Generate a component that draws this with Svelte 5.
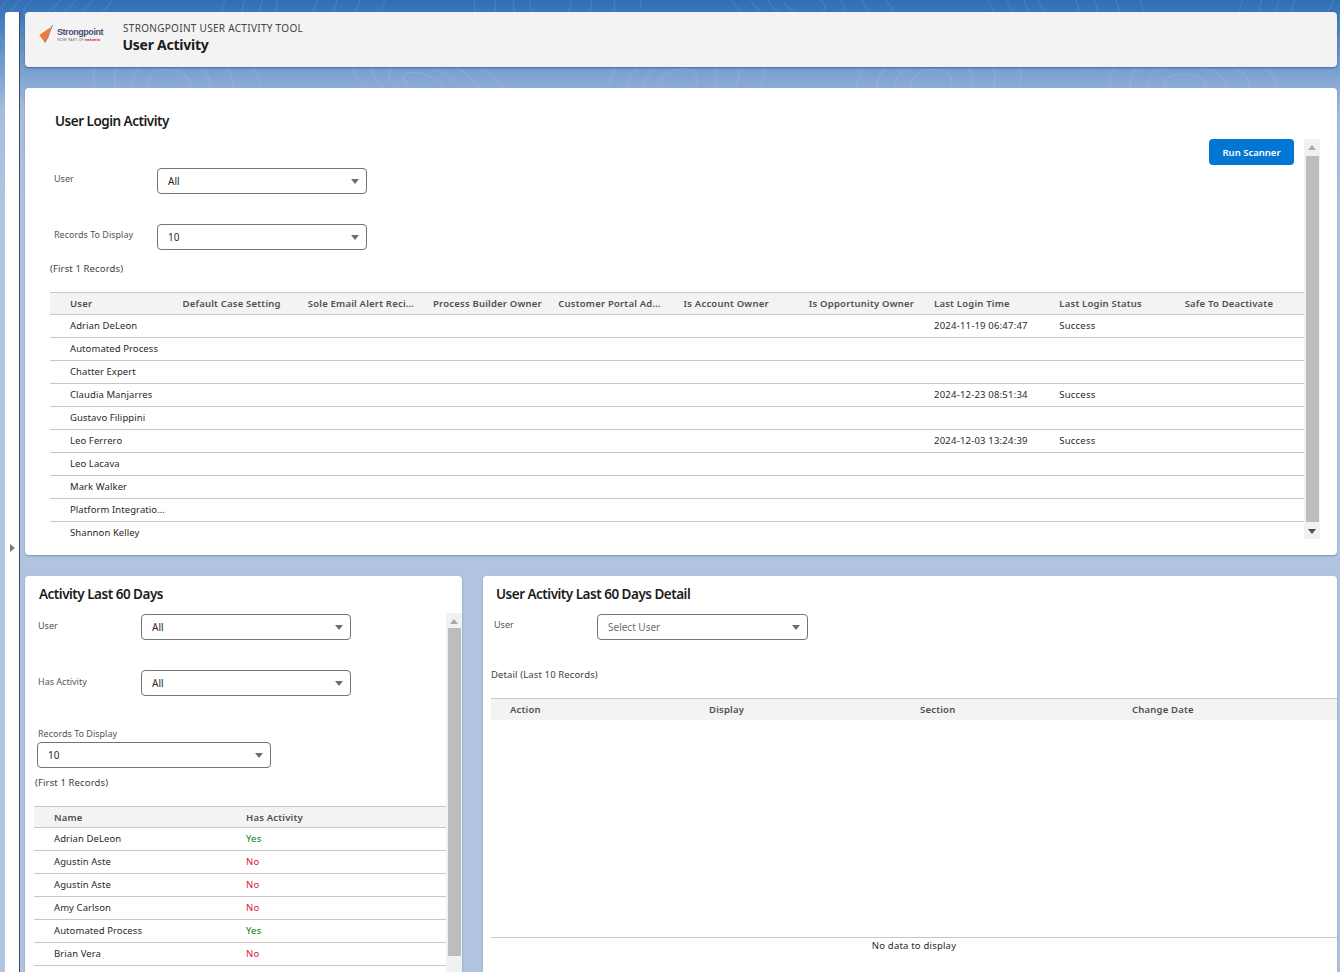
<script lang="ts">
  const loginColumns = [
    "User",
    "Default Case Setting",
    "Sole Email Alert Recipient",
    "Process Builder Owner",
    "Customer Portal Administrator",
    "Is Account Owner",
    "Is Opportunity Owner",
    "Last Login Time",
    "Last Login Status",
    "Safe To Deactivate",
  ];

  const logins = [
    { user: "Adrian DeLeon", time: "2024-11-19 06:47:47", status: "Success" },
    { user: "Automated Process" },
    { user: "Chatter Expert" },
    { user: "Claudia Manjarres", time: "2024-12-23 08:51:34", status: "Success" },
    { user: "Gustavo Filippini" },
    { user: "Leo Ferrero", time: "2024-12-03 13:24:39", status: "Success" },
    { user: "Leo Lacava" },
    { user: "Mark Walker" },
    { user: "Platform Integration User" },
    { user: "Shannon Kelley" },
  ];

  const activity = [
    { name: "Adrian DeLeon", has: "Yes" },
    { name: "Agustin Aste", has: "No" },
    { name: "Agustin Aste", has: "No" },
    { name: "Amy Carlson", has: "No" },
    { name: "Automated Process", has: "Yes" },
    { name: "Brian Vera", has: "No" },
  ];

  const detailColumns = ["Action", "Display", "Section", "Change Date"];

  // faint contour rings behind the header
  const contours = [];
  for (let i = 0; i < 11; i++) {
    const cx = 40 + i * 127;
    const cy = i % 2 ? 84 : 4;
    for (const r of [16, 30, 46, 64]) {
      contours.push({
        cx: cx + r * 0.15,
        cy,
        rx: r * 1.3,
        ry: r * (i % 3 === 0 ? 0.6 : 0.9),
        tilt: (i * 37) % 60 - 30,
      });
    }
  }
</script>

{#snippet select(value, wide = false, placeholder = false)}
  <div class="select" class:wide class:placeholder>
    <span>{value}</span>
    <i class="caret"></i>
  </div>
{/snippet}

{#snippet scrollbar(thumbClass)}
  <div class="scrollbar {thumbClass}">
    <i class="arrow up"></i>
    <div class="thumb"></div>
    <i class="arrow down"></i>
  </div>
{/snippet}

<div class="page">
  <svg class="topo" width="1340" height="88" viewBox="0 0 1340 88" fill="none" aria-hidden="true">
    <g stroke="#ffffff" stroke-opacity="0.11" stroke-width="1">
      {#each contours as c}
        <ellipse cx={c.cx} cy={c.cy} rx={c.rx} ry={c.ry} transform="rotate({c.tilt} {c.cx} {c.cy})" />
      {/each}
    </g>
  </svg>

  <aside class="rail"><i class="rail-toggle"></i></aside>

  <main class="main">
    <header class="page-header">
      <div class="logo">
        <svg width="15" height="19" viewBox="0 0 15 19" aria-hidden="true">
          <polygon points="0.3,10 12,2 6,17.7" fill="#ee7a3b" />
          <polygon points="12,2 13.6,0 9.5,13 6,17.7" fill="#f6a56f" />
          <line x1="13.6" y1="0" x2="6" y2="17.7" stroke="#555a75" stroke-width="0.6" />
        </svg>
        <div class="logo-text">
          <strong>Strongpoint</strong>
          <small>NOW PART OF <b>netwrix</b></small>
        </div>
      </div>
      <div class="heading">
        <div class="eyebrow">STRONGPOINT USER ACTIVITY TOOL</div>
        <h1>User Activity</h1>
      </div>
    </header>

    <section class="card login">
      <h2>User Login Activity</h2>
      <div class="scroll-body">
        <div class="scroll-content">
          <div class="actions"><button type="button">Run Scanner</button></div>
          <div class="field">
            <span class="label">User</span>
            {@render select("All")}
          </div>
          <div class="field">
            <span class="label">Records To Display</span>
            {@render select("10")}
          </div>
          <p class="note">(First 1 Records)</p>
          <table class="login-table">
            <thead>
              <tr>
                {#each loginColumns as col}
                  <th><span>{col}</span></th>
                {/each}
              </tr>
            </thead>
            <tbody>
              {#each logins as row}
                <tr>
                  <td><span>{row.user}</span></td>
                  <td></td><td></td><td></td><td></td><td></td><td></td>
                  <td><span>{row.time ?? ""}</span></td>
                  <td><span>{row.status ?? ""}</span></td>
                  <td></td>
                </tr>
              {/each}
            </tbody>
          </table>
        </div>
        {@render scrollbar("thumb-login")}
      </div>
    </section>

    <div class="bottom">
      <section class="card activity">
        <h2>Activity Last 60 Days</h2>
        <div class="scroll-body">
          <div class="scroll-content">
            <div class="field">
              <span class="label">User</span>
              {@render select("All")}
            </div>
            <div class="field">
              <span class="label">Has Activity</span>
              {@render select("All")}
            </div>
            <div class="stacked">
              <span class="label">Records To Display</span>
              {@render select("10", true)}
            </div>
            <p class="note">(First 1 Records)</p>
            <table class="activity-table">
              <thead>
                <tr><th>Name</th><th>Has Activity</th></tr>
              </thead>
              <tbody>
                {#each activity as row}
                  <tr>
                    <td>{row.name}</td>
                    <td class={row.has === "Yes" ? "yes" : "no"}>{row.has}</td>
                  </tr>
                {/each}
              </tbody>
            </table>
          </div>
          {@render scrollbar("thumb-activity")}
        </div>
      </section>

      <section class="card detail">
        <h2>User Activity Last 60 Days Detail</h2>
        <div class="field">
          <span class="label">User</span>
          {@render select("Select User", false, true)}
        </div>
        <p class="note">Detail (Last 10 Records)</p>
        <div class="detail-head">
          {#each detailColumns as col}
            <span>{col}</span>
          {/each}
        </div>
        <div class="detail-empty"></div>
        <div class="no-data">No data to display</div>
      </section>
    </div>
  </main>
</div>

<style>
  :global(body) {
    margin: 0;
    background: #b0c4df;
    font-family: "Noto Sans", "Liberation Sans", sans-serif;
    color: #2b2826;
  }

  .page {
    position: relative;
    display: flex;
    height: 972px;
    overflow: hidden;
    padding: 12px 3px 0 5px;
    box-sizing: border-box;
    background: linear-gradient(to bottom, #2f6fb6 0, #7ea3d2 75px, #a5bddd 110px, #b0c4df 200px);
  }

  .topo {
    position: absolute;
    top: 0;
    left: 0;
  }

  .rail {
    position: relative;
    flex: none;
    width: 14px;
    margin-right: 5px;
    background: #fff;
    border-right: 1px solid #3b4a5e;
    border-radius: 3px 0 0 0;
    box-sizing: content-box;
    display: flex;
    flex-direction: column;
    align-items: center;
    padding-top: 532px;
  }

  .rail-toggle {
    width: 0;
    height: 0;
    margin-left: 1px;
    border-left: 5.5px solid #7a7a7a;
    border-top: 4.5px solid transparent;
    border-bottom: 4.5px solid transparent;
  }

  .main {
    position: relative;
    flex: 1;
    min-width: 0;
    display: flex;
    flex-direction: column;
  }

  .page-header {
    height: 55px;
    flex: none;
    display: flex;
    align-items: center;
    background: #f3f3f3;
    border-radius: 4px;
    box-shadow: 0 1px 2px rgba(40, 60, 90, 0.55);
    margin-bottom: 21px;
    padding-left: 14px;
    box-sizing: border-box;
  }

  .logo {
    display: flex;
    align-items: flex-start;
    gap: 3px;
    width: 84px;
    flex: none;
    margin-top: -11px;
  }

  .logo-text {
    display: flex;
    flex-direction: column;
    line-height: 1;
    padding-top: 3px;
  }

  .logo-text strong {
    font-family: "Liberation Sans", sans-serif;
    font-size: 9px;
    font-weight: 700;
    letter-spacing: -0.45px;
    color: #4b4e78;
  }

  .logo-text small {
    font-size: 4px;
    color: #77787f;
    margin-top: 1px;
    white-space: nowrap;
  }

  .logo-text b {
    color: #d8213a;
  }

  .heading {
    margin-top: -5px;
  }

  .eyebrow {
    font-size: 10px;
    letter-spacing: 0.3px;
    line-height: 13px;
    color: #444;
  }

  h1 {
    margin: 1px 0 0 -0.5px;
    font-size: 14px;
    line-height: 17px;
    font-weight: 700;
    letter-spacing: -0.25px;
    color: #1c1c1c;
  }

  h2 {
    margin: 0;
    font-size: 13.5px;
    line-height: 18px;
    font-weight: 600;
    letter-spacing: -0.5px;
    color: #1c1c1c;
  }

  .card {
    background: #fff;
    border-radius: 4px;
    box-shadow: 0 1px 2px rgba(60, 80, 110, 0.45);
  }

  .login {
    height: 467px;
    flex: none;
    box-sizing: border-box;
    padding: 24px 17px 0 25px;
    margin-bottom: 21px;
  }

  .login h2 {
    padding-left: 5px;
    margin-bottom: 9px;
  }

  .scroll-body {
    display: flex;
    align-items: flex-start;
  }

  .scroll-content {
    flex: 1;
    min-width: 0;
  }

  .actions {
    display: flex;
    justify-content: flex-end;
    padding-right: 10px;
    height: 29px;
  }

  button {
    width: 85px;
    height: 26px;
    padding: 0;
    border: 0;
    border-radius: 4px;
    background: #0176d3;
    color: #fff;
    font: 600 9.5px "Noto Sans", sans-serif;
  }

  .field {
    display: flex;
    align-items: flex-start;
    margin-bottom: 30px;
    padding-left: 4px;
  }

  .label {
    flex: none;
    width: 103px;
    font-size: 9px;
    line-height: 13px;
    padding-top: 4px;
    color: #555;
  }

  .select {
    flex: none;
    width: 210px;
    height: 26px;
    box-sizing: border-box;
    display: flex;
    align-items: center;
    justify-content: space-between;
    padding: 0 7px 0 10px;
    border: 1px solid #747474;
    border-radius: 4px;
    background: #fff;
    font-size: 10px;
    color: #2b2826;
  }

  .select.wide {
    width: 234px;
  }

  .select.placeholder {
    width: 211px;
    color: #706e6b;
  }

  .caret {
    width: 0;
    height: 0;
    margin-top: 1px;
    border-top: 5px solid #706e6b;
    border-left: 4.5px solid transparent;
    border-right: 4.5px solid transparent;
  }

  .note {
    margin: 0;
    font-size: 9.5px;
    line-height: 13px;
    letter-spacing: 0.12px;
    color: #3e3e3c;
  }

  .login .note {
    margin: -18px 0 17px;
  }

  table {
    border-collapse: collapse;
    table-layout: fixed;
    width: 100%;
    font-size: 9.5px;
    letter-spacing: 0.2px;
  }

  th {
    height: 21px;
    padding: 0;
    background: #f3f3f3;
    border-top: 1px solid #c9c7c5;
    border-bottom: 1px solid #c9c7c5;
    text-align: left;
    font-weight: 600;
    color: #514f4d;
  }

  td {
    height: 20px;
    padding: 0 0 2px;
    border-bottom: 1px solid #c9c7c5;
    color: #2b2826;
  }

  .login-table tr:last-child td {
    border-bottom: 0;
  }

  .login-table th span,
  .login-table td span {
    display: block;
    padding-left: 6px;
    overflow: hidden;
    white-space: nowrap;
    text-overflow: ellipsis;
  }

  .login-table th:first-child,
  .login-table td:first-child {
    width: 126.5px;
  }

  .login-table th:first-child span,
  .login-table td:first-child span {
    padding: 0 11px 0 20px;
  }

  .login-table td:first-child span,
  .activity-table td:first-child {
    letter-spacing: 0.08px;
  }

  .login-table th span {
    padding-right: 8px;
  }

  .scrollbar {
    flex: none;
    width: 16px;
    height: 400px;
    background: #f1f1f1;
    display: flex;
    flex-direction: column;
    align-items: center;
    box-sizing: border-box;
  }

  .thumb {
    width: 13px;
    background: #bdbdbd;
  }

  .thumb-login .thumb {
    height: 366px;
  }

  .thumb-activity {
    height: 420px;
    margin-top: -1px;
  }

  .thumb-activity .thumb {
    height: 328px;
  }

  .thumb-activity .arrow.up {
    margin-bottom: 4px;
  }

  .thumb-activity .arrow.down {
    margin-top: 40px;
  }

  .arrow {
    flex: none;
    width: 0;
    height: 0;
    border-left: 4px solid transparent;
    border-right: 4px solid transparent;
  }

  .arrow.up {
    margin: 6px 0 6px;
    border-bottom: 5px solid #a8a8a8;
  }

  .arrow.down {
    margin-top: 7px;
    border-top: 5px solid #505050;
  }

  .bottom {
    flex: 1;
    min-height: 0;
    display: flex;
    gap: 21px;
  }

  .activity {
    flex: none;
    width: 437px;
    padding: 9px 0 0 9px;
    box-sizing: border-box;
    overflow: hidden;
    border-radius: 4px 4px 0 0;
  }

  .activity h2 {
    padding-left: 5px;
    margin-bottom: 11px;
  }

  .activity .field .label {
    padding-top: 5px;
  }

  .stacked {
    padding: 1px 0 0 3px;
  }

  .stacked .label {
    display: block;
    width: auto;
    padding: 0 0 2px 1px;
  }

  .activity .note {
    margin: 8px 0 17px 1px;
  }

  .activity-table th {
    height: 20px;
  }

  .activity-table th:first-child,
  .activity-table td:first-child {
    width: 192px;
    padding-left: 20px;
  }

  .yes {
    color: #0a7d0a;
  }

  .no {
    color: #d9202c;
  }

  .detail {
    flex: 1;
    min-width: 0;
    padding: 9px 0 0 8px;
    box-sizing: border-box;
    display: flex;
    flex-direction: column;
    border-radius: 4px 4px 0 0;
  }

  .detail h2 {
    padding-left: 5px;
    margin-bottom: 11px;
  }

  .detail .field {
    padding-left: 3px;
    margin-bottom: 28px;
  }

  .detail .note {
    margin-bottom: 17px;
  }

  .detail-head {
    display: grid;
    grid-template-columns: 199px 211px 212px 1fr;
    height: 21px;
    flex: none;
    align-items: center;
    background: #f3f3f3;
    border-top: 1px solid #c9c7c5;
    font-size: 9.5px;
    font-weight: 600;
    letter-spacing: 0.2px;
    color: #514f4d;
  }

  .detail-head span {
    padding-left: 19px;
  }

  .detail-empty {
    height: 217px;
    flex: none;
    border-bottom: 1px solid #c9c7c5;
  }

  .no-data {
    font-size: 9.5px;
    line-height: 16px;
    letter-spacing: 0.2px;
    text-align: center;
    color: #2b2826;
  }
</style>
